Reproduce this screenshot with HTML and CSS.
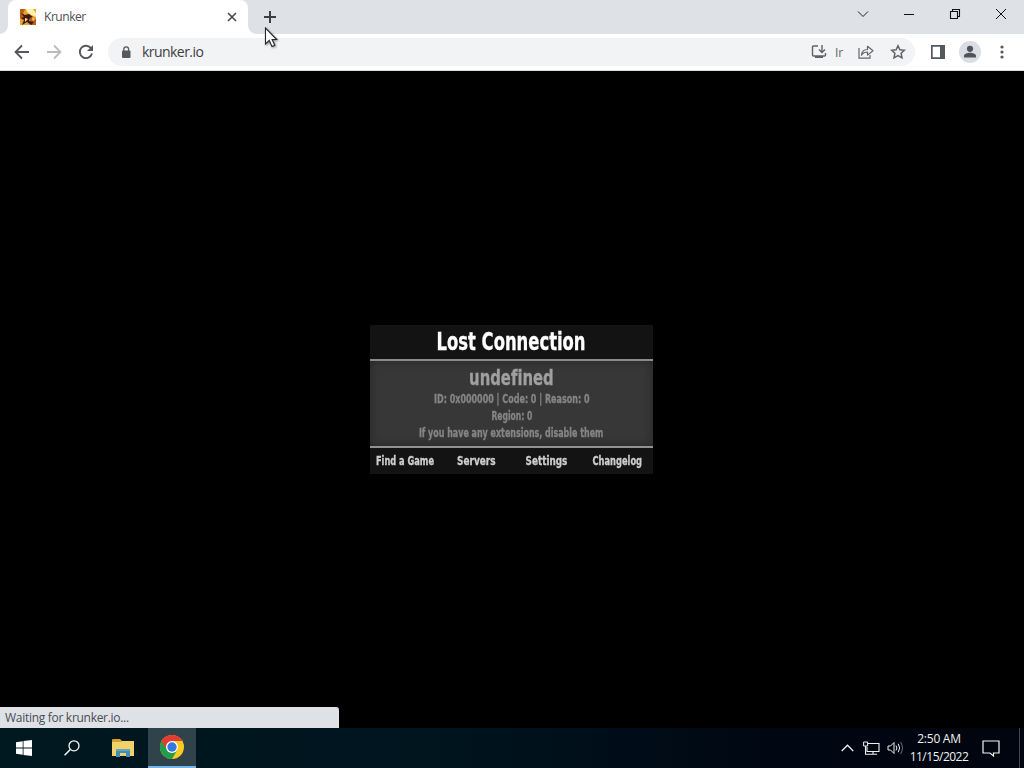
FILE: index.html
```html
<!DOCTYPE html>
<html lang="en">
<head>
<meta charset="utf-8">
<title>Krunker</title>
<link rel="stylesheet" href="styles.css">
</head>
<body>
<div class="screen">
  <header class="tabstrip">
    <div class="tab">
      <svg class="favicon" width="16" height="16" viewBox="0 0 16 16"><path fill="#e9a42d" d="M0 0h16v16H0z"/><path fill="#fff0ad" d="M6 0h7l3 4v4l-5-2-4-3z"/><path fill="#b95e16" d="M0 0h5L3 5l3 3-3 3-3-2zM9 8l7 2v6h-5z"/><path fill="#3b1718" d="M1 4l4 2 4-1 4 3-3 1-1 3 5 1-3 3-4-3-5 3 2-5-3-2 3-1z"/><path fill="#ffe095" d="M5 9l3 1-3 3zM12 9l3 1-2 2z"/></svg>
      <span class="tab-title">Krunker</span>
      <svg class="tab-close" width="10" height="10" viewBox="0 0 10 10"><path d="M1 1l8 8M9 1L1 9" stroke="#45484c" stroke-width="1.6"/></svg>
    </div>
    <svg class="new-tab" width="14" height="14" viewBox="0 0 14 14"><path d="M7 1v12M1 7h12" stroke="#3c4043" stroke-width="2"/></svg>
    <div class="window-buttons">
      <span><svg width="12" height="12" viewBox="0 0 12 12"><path d="M1 3.5l5 5 5-5" fill="none" stroke="#222"/></svg></span>
      <span><svg width="12" height="12" viewBox="0 0 12 12"><path d="M1 6.5h10" stroke="#111"/></svg></span>
      <span><svg width="12" height="12" viewBox="0 0 12 12"><path d="M1.500 3.500h7v7h-7zM3.500 3.500v-2h7v7h-2" fill="none" stroke="#111" stroke-width="1.100"/></svg></span>
      <span><svg width="12" height="12" viewBox="0 0 12 12"><path d="M1 1l10 10M11 1L1 11" stroke="#111"/></svg></span>
    </div>
  </header>
  <nav class="toolbar">
    <span class="slot"><svg width="16" height="16" viewBox="0 0 16 16"><path d="M15 8H2M8 1.500L1.500 8 8 14.500" fill="none" stroke="#55585c" stroke-width="1.800"/></svg></span>
    <span class="slot"><svg width="16" height="16" viewBox="0 0 16 16"><path d="M1 8h13M8 1.500L14.500 8 8 14.500" fill="none" stroke="#b9bbbe" stroke-width="1.800"/></svg></span>
    <span class="slot"><svg width="16" height="16" viewBox="0 0 16 16"><path d="M13.200 4.500A6.200 6.200 0 1 0 14 9.600" fill="none" stroke="#55585c" stroke-width="1.900"/><path d="M15 1v6H9z" fill="#55585c"/></svg></span>
    <div class="omnibox">
      <svg class="lock" width="10" height="13" viewBox="0 0 10 13"><rect x="1" y="4.500" width="8.500" height="7.500" rx="1" fill="#55585c"/><path d="M2.800 5V3.200a2.400 2.400 0 0 1 4.800 0V5" fill="none" stroke="#55585c" stroke-width="1.300"/></svg>
      <span class="url">krunker.io</span>
      <span class="slot install"><svg width="16" height="16" viewBox="0 0 16 16"><path d="M7 2H2.500Q1.500 2 1.500 3v8q0 1 1 1h11q1 0 1-1V9" fill="none" stroke="#5f6368" stroke-width="1.400"/><path d="M4 12h8v2H4z" fill="#5f6368"/><path d="M11 1v7M8 5.500l3 3 3-3" fill="none" stroke="#5f6368" stroke-width="1.400"/></svg></span>
      <span class="install-text">Ir</span>
      <span class="slot"><svg width="18" height="16" viewBox="0 0 18 16"><path d="M2 4v10.200h11V11" fill="none" stroke="#63666b" stroke-width="1.200"/><path d="M4.500 11.200c.3-4 2.500-5.700 6-5.700V2.300L16 6.700l-5.500 4.400V8c-3 0-4.700 1-6 3.200z" fill="none" stroke="#63666b" stroke-width="1.200" stroke-linejoin="round"/></svg></span>
      <span class="slot"><svg width="16" height="16" viewBox="0 0 16 16"><path d="M8 1.800l1.900 4 4.500.5-3.300 3 .9 4.500-4-2.300-4 2.300.9-4.500-3.300-3 4.500-.5z" fill="none" stroke="#5f6368" stroke-width="1.500"/></svg></span>
    </div>
    <span class="slot"><svg width="14" height="14" viewBox="0 0 14 14"><path d="M0 0h14v14H0zM1.700 1.700v10.600H9V1.700z" fill="#55585c" fill-rule="evenodd"/></svg></span>
    <span class="slot"><svg width="22" height="22" viewBox="0 0 22 22"><circle cx="11" cy="11" r="11" fill="#dadee3"/><circle cx="11" cy="7.800" r="3.100" fill="#50545a"/><path d="M5 16.500v-1.700c0-2 3.500-3 6-3s6 1 6 3v1.700z" fill="#50545a"/></svg></span>
    <span class="slot"><svg width="4" height="14" viewBox="0 0 4 14"><g fill="#55585c"><circle cx="2" cy="2" r="1.600"/><circle cx="2" cy="7" r="1.600"/><circle cx="2" cy="12" r="1.600"/></g></svg></span>
  </nav>
  <main class="page">
    <section class="dialog">
      <h1><span class="w-title">Lost Connection</span></h1>
      <div class="details">
        <h2><span class="w-error">undefined</span></h2>
        <p><span class="w-id">ID: 0x000000 | Code: 0 | Reason: 0</span></p>
        <p><span class="w-region">Region: 0</span></p>
        <p><span class="w-hint">If you have any extensions, disable them</span></p>
      </div>
      <div class="links"><a class="w-find">Find a Game</a><a class="w-servers">Servers</a><a class="w-settings">Settings</a><a class="w-changelog">Changelog</a></div>
    </section>
    <div class="status">Waiting for krunker.io...</div>
  </main>
  <footer class="taskbar">
    <span class="app"><svg width="16" height="16" viewBox="0 0 16 16"><path d="M0 2.200l6.700-1v6.400H0zM7.500 1L16 0v7.600H7.500zM0 8.400h6.700v6.400l-6.700-1zM7.500 8.400H16V16l-8.500-1z" fill="#fff"/></svg></span>
    <span class="app"><svg width="16" height="16" viewBox="0 0 16 16"><circle cx="10" cy="5.800" r="5" fill="none" stroke="#f3f7f8" stroke-width="1.300"/><path d="M6.300 9.500L.6 15.300" stroke="#f3f7f8" stroke-width="1.500"/></svg></span>
    <span class="app explorer"><svg width="22" height="19" viewBox="0 0 22 19"><path d="M0 1q0-1 1-1h7l2 2h11v4H0z" fill="#d99d2b"/><path d="M0 3h9l1-1h12v15H0z" fill="#f0d16a"/><path d="M4 10h14v8h-4v-4H8v4H4z" fill="#3c8fbd"/><path d="M4 10h14v2H4z" fill="#62a5bd"/></svg></span>
    <span class="app active"><svg width="24" height="24" viewBox="0 0 24 24"><circle cx="12" cy="12" r="12" fill="#fbcb21"/><path d="M12 12L1.600 6A12 12 0 0 0 12 24l5.200-9z" fill="#249b4d"/><path d="M1.600 6A12 12 0 0 1 22.400 6H12v6H5z" fill="#e53b32"/><circle cx="12" cy="12" r="6" fill="#fff"/><circle cx="12" cy="12" r="4.700" fill="#3578dc"/></svg></span>
    <div class="tray">
      <span><svg width="13" height="8" viewBox="0 0 13 8"><path d="M.7 7l5.800-5.800L12.300 7" fill="none" stroke="#eee" stroke-width="1.300"/></svg></span>
      <span><svg width="17" height="14" viewBox="0 0 17 14"><path d="M5 2.500h11v8H4V6M10 11v2M6 13.200h8M2.500 5v8.200H6" fill="none" stroke="#eee" stroke-width="1.100"/><path d="M.6 1h4v4h-4z" fill="#020a15" stroke="#eee"/></svg></span>
      <span><svg width="16" height="14" viewBox="0 0 16 14"><path d="M1 5h2.500L7 1.500v11L3.500 9H1z" fill="none" stroke="#eee"/><path d="M9 4.500q1.800 2.500 0 5M11.200 2.800q3 4.200 0 8.400" fill="none" stroke="#eee"/><path d="M13.500 1q4 6 0 12" fill="none" stroke="#657078"/></svg></span>
      <div class="clock"><span class="time">2:50 AM</span><span class="date">11/15/2022</span></div>
      <span class="notice"><svg width="18" height="17" viewBox="0 0 18 17"><path d="M1 1h16v12h-5.500v3L8 13H1z" fill="none" stroke="#f3f3f3" stroke-width="1.200"/></svg></span>
    </div>
  </footer>
  <svg class="cursor" width="16" height="22" viewBox="0 0 16 22"><path d="M1.500 1v16l3.700-3.500 2.800 6 2.800-1.300-2.700-5.700h4.600z" fill="#fff" stroke="#26292c" stroke-width="1.100"/></svg>
</div>
</body>
</html>
```
FILE: styles.css
```css
* { box-sizing: border-box; }
body { margin: 0; font-family: "Open Sans", "Noto Sans", sans-serif; }
svg { display: block; flex: none; }
.screen { position: relative; width: 1024px; height: 768px; display: flex; flex-direction: column; overflow: hidden; background: #000; }
.tabstrip { height: 34px; display: flex; background: #dee1e6; padding-left: 8px; }
.tab { position: relative; width: 240px; height: 34px; background: #fff; border-radius: 8px 8px 0 0; display: flex; align-items: center; padding: 0 11px 0 12px; }
.tab::before, .tab::after { content: ""; position: absolute; bottom: 0; width: 8px; height: 8px; }
.tab::before { left: -8px; background: radial-gradient(circle at 0 0, transparent 7.500px, #fff 8px); }
.tab::after { right: -8px; background: radial-gradient(circle at 100% 0, transparent 7.500px, #fff 8px); }
.tab-title { margin-left: 8px; font-size: 12px; line-height: 16px; letter-spacing: -.45px; color: #4b4e52; }
.tab-close { margin-left: auto; }
.new-tab { margin: 10px 0 0 15px; }
.window-buttons { margin-left: auto; display: flex; height: 28px; }
.window-buttons span { width: 46px; display: flex; align-items: center; justify-content: center; }
.toolbar { height: 37px; background: #fff; display: flex; align-items: center; padding: 0 6px; border-bottom: 1px solid #d9dcdc; }
.slot { width: 32px; height: 28px; flex: none; display: flex; align-items: center; justify-content: center; }
.omnibox { width: 807px; height: 28px; margin: 0 7px 0 6px; border-radius: 14px; background: #f1f3f4; display: flex; align-items: center; padding: 0 1px 0 13px; }
.url { margin-left: 11px; font-size: 14px; line-height: 20px; letter-spacing: -.55px; color: #3c4043; }
.install { margin-left: auto; }
.install-text { width: 15px; font-size: 12px; color: #5f6368; overflow: hidden; }
.page { height: 657px; display: flex; flex-direction: column; align-items: center; padding-top: 254px; }
.dialog { width: 283px; height: 149px; margin-right: 1px; background: #131313; font-family: "DejaVu Sans Condensed", "DejaVu Sans", sans-serif; font-weight: bold; font-variant-ligatures: none; -webkit-text-stroke: .3px currentColor; }
.dialog h1, .dialog h2, .dialog p { margin: 0; display: flex; justify-content: center; white-space: nowrap; }
.dialog h1 { height: 36px; padding-top: 1px; border-bottom: 2px solid #8b8b8b; color: #fff; font-size: 24px; line-height: 33px; }
.details { height: 85px; padding-top: 5px; background: #373737; box-shadow: inset 0 0 8px #252525; }
.dialog h2 { height: 25px; font-size: 22px; line-height: 23px; color: #a0a0a0; }
.dialog p { height: 17px; font-size: 12px; line-height: 17px; color: #858585; }
.links { height: 28px; border-top: 2px solid #929292; display: grid; grid-template-columns: repeat(4, minmax(0, 1fr)); font-size: 12px; line-height: 27px; color: #cecece; white-space: nowrap; }
.dialog span, .links a { transform-origin: center; }
.links a { justify-self: center; }
.w-title { transform: scaleX(.76); }
.w-error { transform: scaleX(.75); }
.w-id { transform: scaleX(.742); }
.w-region { transform: scaleX(.71); }
.w-hint { transform: scaleX(.737); }
.w-find { transform: scaleX(.765); }
.w-servers { transform: scaleX(.83); }
.w-settings { transform: scaleX(.82); }
.w-changelog { transform: scaleX(.77); }
.status { align-self: flex-start; width: 339px; height: 21px; margin-top: auto; padding-left: 5px; border-radius: 0 3px 0 0; background: #dee1e6; color: #4a4d51; font-size: 12px; line-height: 21px; letter-spacing: -.29px; }
.taskbar { height: 40px; display: flex; background: linear-gradient(90deg, #001820, #00141e 45%, #000712 75%, #00050f); }
.app { width: 48px; height: 40px; display: flex; align-items: center; justify-content: center; }
.explorer { width: 52px; padding-left: 2px; }
.active { background: #31434a; border-bottom: 2px solid #75b5ea; }
.tray { margin-left: auto; display: flex; align-items: center; width: 185px; border-right: 1px solid #40454e; margin-right: 4px; }
.tray > span { width: 24px; display: flex; justify-content: center; }
.clock { width: 64px; height: 36px; display: flex; flex-direction: column; align-items: center; color: #f1f1f1; font-size: 12px; line-height: 18px; white-space: nowrap; }
.tray > .notice { width: 40px; }
.time { letter-spacing: -.25px; }
.date { letter-spacing: -.5px; }
.cursor { position: absolute; left: 264px; top: 27px; filter: drop-shadow(1px 1px 1px #0006); }
```
